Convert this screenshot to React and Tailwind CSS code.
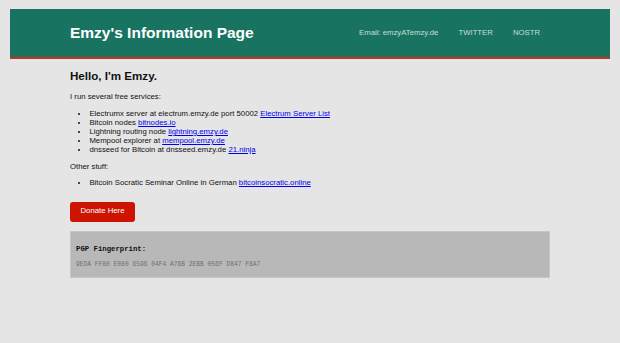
export default function App() {
  const A = ({ children }) => (
    <a href="#" className="text-[#0000ee] underline">{children}</a>
  );
  return (
    <div className="min-h-[343px] bg-[#e5e5e5] pt-[9px] font-['Liberation_Sans',Arial,sans-serif] text-[7.75px] leading-[8.9px] text-[#111]">
      <header className="mx-[10px] h-[50px] bg-[#187461] border-b-[2px] border-[#c6321f]">
        <div className="mx-auto flex h-full w-[480px] items-center justify-between">
          <div className="text-[15.5px] font-bold leading-[18px] text-white">Emzy's Information Page</div>
          <nav className="flex items-center text-[7.75px] text-[#c9ddd6]">
            <span className="px-[10px]">Email: emzyATemzy.de</span>
            <span className="px-[10px]">TWITTER</span>
            <span className="px-[10px]">NOSTR</span>
          </nav>
        </div>
      </header>
      <main className="mx-auto w-[480px]">
        <h1 className="mt-[10px] text-[11.6px] font-bold leading-[13.3px] text-[#111]">Hello, I'm Emzy.</h1>
        <p className="mt-[11px]">I run several free services:</p>
        <ul className="mt-[8px] list-disc pl-[19.4px]">
          <li>Electrumx server at electrum.emzy.de port 50002 <A>Electrum Server List</A></li>
          <li>Bitcoin nodes <A>bitnodes.io</A></li>
          <li>Lightning routing node <A>lightning.emzy.de</A></li>
          <li>Mempool explorer at <A>mempool.emzy.de</A></li>
          <li>dnsseed for Bitcoin at dnsseed.emzy.de <A>21.ninja</A></li>
        </ul>
        <p className="mt-[8.5px]">Other stuff:</p>
        <ul className="mt-[7px] list-disc pl-[19.4px]">
          <li>Bitcoin Socratic Seminar Online in German <A>bitcoinsocratic.online</A></li>
        </ul>
        <button className="mt-[14px] flex h-[19.5px] w-[65px] items-center justify-center rounded-[3px] bg-[#cc1400] text-[7.75px] text-white">Donate Here</button>
        <div className="mt-[9px] h-[47px] border border-[#c6c6c6] bg-[#b8b8b8] px-[5px] font-['Liberation_Mono','Courier_New',monospace]">
          <div className="mt-[13px] text-[7.3px] font-bold leading-[9px] text-[#111]">PGP Fingerprint:</div>
          <div className="mt-[7px] text-[6.27px] leading-[8px] text-[#707070]">9EDA FF80 E080 6596 04F4 A76B 2EBB 056F D847 F8A7</div>
        </div>
      </main>
    </div>
  );
}
